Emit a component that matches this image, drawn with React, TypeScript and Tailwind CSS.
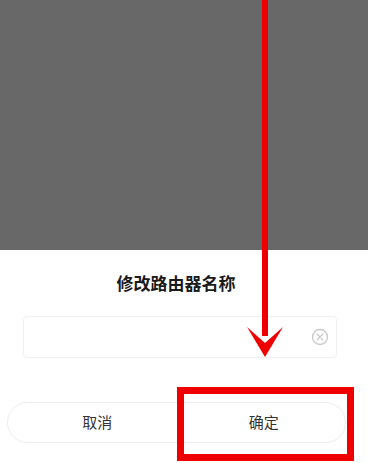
import React from "react"

const font = { fontFamily: '"Noto Sans CJK SC", "Noto Sans", sans-serif' }

function ClearIcon() {
  return (
    <svg width="18" height="18" viewBox="0 0 18 18" fill="none">
      <circle cx="9" cy="9" r="7.5" stroke="#c8c8c8" strokeWidth="1.3" />
      <path d="M6.3 6.3l5.4 5.4M11.7 6.3l-5.4 5.4" stroke="#c8c8c8" strokeWidth="1.3" strokeLinecap="round" />
    </svg>
  )
}

export default function App() {
  return (
    <div className="relative w-[368px] h-[463px] overflow-hidden bg-white" style={font}>
      {/* dimmed page behind the sheet */}
      <div className="h-[250px] bg-[#686868]" />

      {/* bottom sheet */}
      <div className="flex flex-col items-center pt-[21px]">
        <h2 className="mr-[16px] text-[17px] leading-6 font-bold text-[#1a1a1a]">修改路由器名称</h2>

        <div className="mt-[21px] ml-[23px] mr-[31px] self-stretch h-[42px] flex items-center justify-end pr-[7px] border border-[#efefef] rounded-[4px]">
          <ClearIcon />
        </div>

        <div className="mt-[44px] ml-[7px] mr-[22px] self-stretch h-[41px] flex border border-[#ececec] rounded-full">
          <button className="flex-1 flex items-center justify-center pl-[8px] text-[15px] text-[#333]">取消</button>
          <button className="flex-1 flex items-center justify-center pl-[4px] text-[15px] text-[#333]">确定</button>
        </div>
      </div>

      {/* red annotation: arrow */}
      <svg className="absolute left-0 top-0 pointer-events-none" width="368" height="463" viewBox="0 0 368 463">
        <rect x="262" y="0" width="6" height="336" fill="#ee0000" />
        <polygon points="247,327 265,343 283,327 265,357" fill="#ee0000" />
      </svg>

      {/* red annotation: box around confirm */}
      <div className="absolute left-[177px] top-[387px] w-[177px] h-[74px] border-[7px] border-[#ee0000] pointer-events-none" />
    </div>
  )
}
